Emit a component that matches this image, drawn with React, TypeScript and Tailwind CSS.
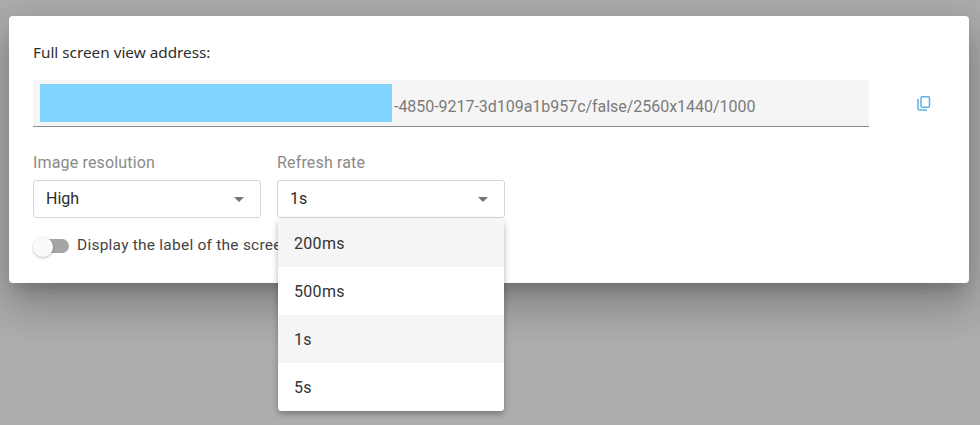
const options = ['200ms', '500ms', '1s', '5s'];

const Caret = () => (
  <svg width="10" height="5" viewBox="0 0 10 5" className="text-[#757575]">
    <path d="M0 0l5 5 5-5z" fill="currentColor" />
  </svg>
);

const CopyIcon = () => (
  <svg width="16" height="17" viewBox="0 0 16 17" fill="none" stroke="#5fb0e0" strokeWidth="1.5">
    <path d="M2 4v9.5c0 .8.7 1.5 1.5 1.5H11" />
    <rect x="5" y="1.8" width="8.5" height="10.4" rx="1.2" />
  </svg>
);

const Select = ({ label, value }: { label: string; value: string }) => (
  <div className="w-[228px]">
    <div className="h-[19px] text-[16px] leading-[19px] tracking-[0.01em] text-[#8a8a8a]">{label}</div>
    <div className="mt-[8px] h-[38px] flex items-center justify-between pl-[12px] pr-[16px] border border-[#d6d6d6] rounded-[3px] bg-white text-[16px] text-[#2b2b2b]">
      <span>{value}</span>
      <Caret />
    </div>
  </div>
);

export default function App() {
  return (
    <div className="relative w-[980px] h-[425px] overflow-hidden bg-[#adadad] font-['Roboto',sans-serif]">
      {/* Modal */}
      <div className="absolute left-[9px] top-[16px] w-[960px] h-[267px] bg-white rounded-[4px] shadow-[0_11px_15px_-7px_rgba(0,0,0,0.2),0_24px_38px_3px_rgba(0,0,0,0.14),0_9px_46px_8px_rgba(0,0,0,0.12)] pl-[24px] pt-[27px]">
        <div className="h-[19px] font-['Noto_Sans',sans-serif] text-[15.3px] leading-[19px] text-[#2e2e2e]">Full screen view address:</div>
        <div className="mt-[18px] flex items-center">
          <div className="w-[836px] h-[47px] bg-[#f5f5f5] border-b border-[#8c8c8c] pl-[7px] pt-[4px] flex items-start">
            <div className="w-[352px] h-[38px] bg-[#81d4fe]"></div>
            <span className="ml-[2px] text-[16px] leading-[46px] h-[38px] tracking-[-0.002em] text-[#7b7b7b] whitespace-nowrap">-4850-9217-3d109a1b957c/false/2560x1440/1000</span>
          </div>
          <div className="ml-[47px] -mt-[1px] flex">
            <CopyIcon />
          </div>
        </div>
        <div className="mt-[26px] flex gap-[16px]">
          <Select label="Image resolution" value="High" />
          <Select label="Refresh rate" value="1s" />
        </div>
        <div className="mt-[16px] flex items-center">
          <div className="relative w-[36px] h-[20px] flex items-center">
            <div className="ml-[2px] w-[34px] h-[14px] rounded-full bg-[#a5a5a5]"></div>
            <div className="absolute left-0 top-[1px] w-[20px] h-[20px] rounded-full bg-[#fafafa] shadow-[0_1px_3px_rgba(0,0,0,0.25)]"></div>
          </div>
          <span className="ml-[8px] text-[15.5px] tracking-[0.015em] text-[#444] whitespace-nowrap">Display the label of the screen</span>
        </div>
      </div>

      {/* Refresh rate dropdown */}
      <div className="absolute left-[278px] top-[219px] w-[226px] bg-white rounded-[4px] shadow-[0_3px_6px_rgba(0,0,0,0.3)] overflow-hidden">
        {options.map((o, i) => (
          <div key={o} className={`h-[48px] flex items-center pl-[16px] pt-[2px] text-[16px] tracking-[0.02em] text-[#333] ${i % 2 === 0 ? 'bg-[#f5f5f5]' : 'bg-white'}`}>
            {o}
          </div>
        ))}
      </div>
    </div>
  );
}
